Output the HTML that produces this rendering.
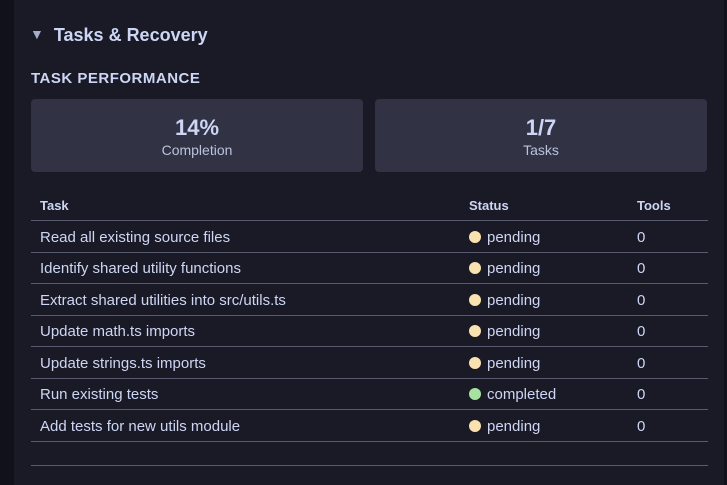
<!DOCTYPE html>
<html><head><style>
html,body{margin:0;padding:0;width:727px;height:485px;overflow:hidden;background:#1a1a26;font-family:"Liberation Sans",sans-serif;color:#cdd6f4}
.side{position:absolute;left:0;top:0;width:14px;height:485px;background:#11111b}
.rside{position:absolute;left:724px;top:0;width:3px;height:485px;background:#11111b}
.title{position:absolute;left:30px;top:25px;font-size:18px;font-weight:bold;color:#cdd6f4}
.title .tri{color:#a6adc8;font-size:14px;margin-right:10px;position:relative;top:-2px}
.sub{position:absolute;left:31px;top:70px;font-size:15px;font-weight:bold;letter-spacing:.5px;color:#cdd6f4}
.card{position:absolute;top:99px;height:73px;width:332px;background:#313244;border-radius:4px;text-align:center}
.card .v{font-size:22px;font-weight:bold;margin-top:16px;line-height:26px}
.card .l{font-size:14px;color:#bac2de;line-height:18px}
table{position:absolute;left:31px;top:190px;width:677px;border-collapse:collapse;font-size:15px}
th{font-size:13px;font-weight:bold;text-align:left;height:30px;padding:0 0 0 9px;border-bottom:1px solid #585b70}
td{height:30.5px;padding:0 0 0 9px;border-bottom:1px solid #585b70;color:#cdd6f4;position:relative;top:1px}
.d{display:inline-block;width:12px;height:12px;border-radius:50%;background:#f9e2af;margin-right:6px;vertical-align:-1px}
.g{background:#a6e3a1}
.line{position:absolute;left:31px;top:465px;width:677px;height:1px;background:#585b70}
</style></head><body>
<div class="side"></div><div class="rside"></div>
<div class="title"><span class="tri">▼</span>Tasks &amp; Recovery</div>
<div class="sub">TASK PERFORMANCE</div>
<div class="card" style="left:31px"><div class="v">14%</div><div class="l">Completion</div></div>
<div class="card" style="left:375px"><div class="v">1/7</div><div class="l">Tasks</div></div>
<table>
<tr><th style="width:420px">Task</th><th style="width:159px">Status</th><th>Tools</th></tr>
<tr><td>Read all existing source files</td><td><span class="d"></span>pending</td><td>0</td></tr>
<tr><td>Identify shared utility functions</td><td><span class="d"></span>pending</td><td>0</td></tr>
<tr><td>Extract shared utilities into src/utils.ts</td><td><span class="d"></span>pending</td><td>0</td></tr>
<tr><td>Update math.ts imports</td><td><span class="d"></span>pending</td><td>0</td></tr>
<tr><td>Update strings.ts imports</td><td><span class="d"></span>pending</td><td>0</td></tr>
<tr><td>Run existing tests</td><td><span class="d g"></span>completed</td><td>0</td></tr>
<tr><td>Add tests for new utils module</td><td><span class="d"></span>pending</td><td>0</td></tr>
</table>
<div class="line"></div>
</body></html>
